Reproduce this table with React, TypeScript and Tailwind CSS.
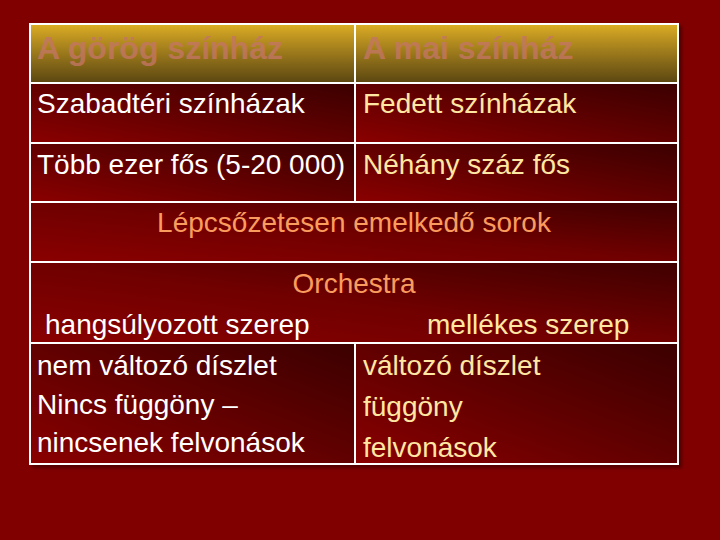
const cell = "bg-linear-to-tr from-[#8a0000] to-[#3c0000]";
const wide = "bg-linear-to-tr from-[#8a0000] via-[#700000] to-[#400000]";

const App = () => {
  return (
    <div className="h-[540px] w-[720px] overflow-hidden bg-[#800000] pl-[29px] pt-[23px] font-['Liberation_Sans',Arial,sans-serif]">
      <div className="w-[650px] border-2 border-white shadow-[3px_3px_3px_rgba(0,0,0,0.35)]">
        {/* header */}
        <div className="grid h-[59px] grid-cols-2 border-b-2 border-white">
          <div className="bg-linear-to-b from-[#dbab24] to-[#5d4811] pl-[6px] text-[32px] font-bold leading-[46px] text-[rgba(196,118,100,0.8)]">
            A görög színház
          </div>
          <div className="border-l-2 border-white bg-linear-to-b from-[#dbab24] to-[#5d4811] pl-[7px] text-[32px] font-bold leading-[46px] text-[rgba(196,118,100,0.8)]">
            A mai színház
          </div>
        </div>

        <div className="grid h-[60px] grid-cols-2 border-b-2 border-white text-[28px] leading-[40px]">
          <div className={`${cell} pl-[6px] text-white`}>Szabadtéri színházak</div>
          <div className={`${cell} border-l-2 border-white pl-[7px] text-[#ffe7a3]`}>
            Fedett színházak
          </div>
        </div>

        <div className="grid h-[59px] grid-cols-2 border-b-2 border-white text-[28px] leading-[40px]">
          <div className={`${cell} pl-[6px] pt-[1px] text-white`}>
            Több ezer fős (5-20 000)
          </div>
          <div className={`${cell} border-l-2 border-white pl-[7px] pt-[1px] text-[#ffe7a3]`}>
            Néhány száz fős
          </div>
        </div>

        <div className={`${wide} h-[60px] border-b-2 border-white text-center text-[28px] leading-[40px] text-[#fa9c5e]`}>
          Lépcsőzetesen emelkedő sorok
        </div>

        <div className={`${wide} h-[81px] border-b-2 border-white text-[28px] leading-[41px]`}>
          <div className="text-center text-[#fa9c5e]">Orchestra</div>
          <div className="flex pl-[14px]">
            <span className="w-[382px] text-white">hangsúlyozott szerep</span>
            <span className="text-[#ffe7a3]">mellékes szerep</span>
          </div>
        </div>

        <div className="grid h-[119px] grid-cols-2 text-[28px] leading-[41px]">
          <div className={`${cell} overflow-hidden pl-[6px] pt-[1px] text-white`}>
            <p>nem változó díszlet</p>
            <p className="leading-[38px]">
              Nincs függöny –<br />
              nincsenek felvonások
            </p>
          </div>
          <div className={`${cell} overflow-hidden border-l-2 border-white pl-[7px] pt-[1px] text-[#ffe7a3]`}>
            <p>változó díszlet</p>
            <p>függöny</p>
            <p>felvonások</p>
          </div>
        </div>
      </div>
    </div>
  );
};

export default App;
